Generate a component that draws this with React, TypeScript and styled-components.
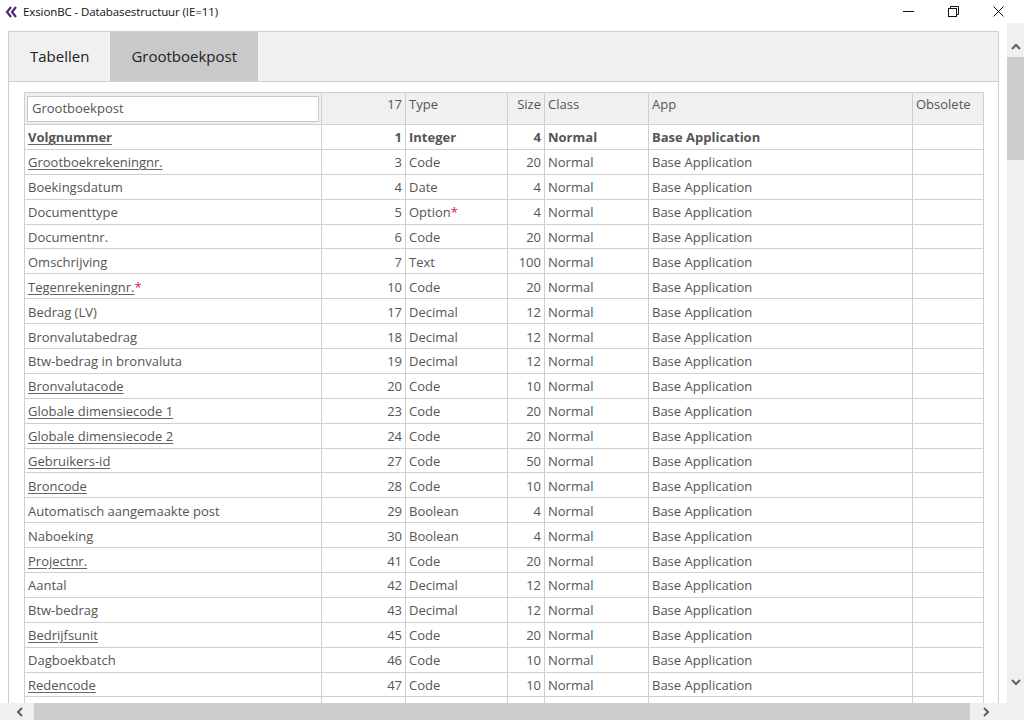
import React from "react";
import styled, { createGlobalStyle } from "styled-components";

const Global = createGlobalStyle`
  html, body { margin: 0; padding: 0; background: #fff; }
  body { width: 1024px; height: 720px; overflow: hidden; font-family: "Open Sans", "Noto Sans", sans-serif; }
  * { box-sizing: border-box; }
`;

const Window = styled.div`
  width: 1024px;
  height: 720px;
  display: flex;
  flex-direction: column;
  background: #fff;
`;

const TitleBar = styled.div`
  height: 23px;
  display: flex;
  align-items: center;
  padding-left: 5px;
  flex-shrink: 0;
`;

const TitleText = styled.span`
  font-family: "Open Sans", sans-serif;
  font-size: 11.5px;
  color: #111;
  margin-left: 5px;
  letter-spacing: -0.1px;
`;

const Controls = styled.div`
  margin-left: auto;
  margin-right: 3px;
  display: flex;
  height: 23px;
`;

const CtrlButton = styled.div`
  width: 45px;
  height: 23px;
  display: flex;
  align-items: center;
  justify-content: center;
`;

const Middle = styled.div`
  flex: 1;
  display: flex;
  min-height: 0;
`;

const Viewport = styled.div`
  flex: 1;
  overflow: hidden;
  padding: 8px 0 0 8px;
`;

const Panel = styled.div`
  width: 991px;
  border: 1px solid #cfcfcf;
  border-bottom: none;
  height: 100%;
  background: #fff;
`;

const TabBar = styled.div`
  height: 50px;
  background: #f0f0f0;
  border-bottom: 1px solid #cfcfcf;
  display: flex;
`;

const Tab = styled.div<{ $active?: boolean }>`
  padding: 0 21px 1px;
  display: flex;
  align-items: center;
  font-size: 15px;
  color: #222;
  background: ${(p) => (p.$active ? "#c9c9c9" : "transparent")};
`;

const Content = styled.div`
  padding: 10px 0 0 15px;
`;

const Table = styled.table`
  border-collapse: collapse;
  table-layout: fixed;
  width: 959px;
  font-size: 13px;
  color: #555;
`;

const HeadCell = styled.th<{ $right?: boolean }>`
  background: #f0f0f0;
  border: 1px solid #cfcfcf;
  font-weight: normal;
  text-align: ${(p) => (p.$right ? "right" : "left")};
  vertical-align: top;
  padding: 2px 3px 0 3px;
  height: 32px;
  white-space: nowrap;
`;

const SearchCell = styled.th`
  background: #f0f0f0;
  border: 1px solid #cfcfcf;
  padding: 2px;
  height: 32px;
`;

const SearchInput = styled.div`
  height: 26px;
  background: #fff;
  border: 1px solid #c8c8c8;
  display: flex;
  align-items: center;
  padding: 0 0 2px 4px;
  font-weight: normal;
  text-align: left;
  color: #555;
`;

const Cell = styled.td<{ $right?: boolean; $bold?: boolean }>`
  border: 1px solid #cfcfcf;
  padding: 1px 3px 0;
  height: 24.9px;
  white-space: nowrap;
  overflow: hidden;
  text-align: ${(p) => (p.$right ? "right" : "left")};
  font-weight: ${(p) => (p.$bold ? 700 : 400)};
`;

const Link = styled.span`
  text-decoration: underline;
  text-decoration-color: #666;
  text-underline-offset: 2px;
`;

const Star = styled.span`
  color: #e0103a;
`;

const VScroll = styled.div`
  width: 17px;
  background: #f0f0f0;
  display: flex;
  flex-direction: column;
  align-items: center;
  flex-shrink: 0;
  padding: 17px 0 13px;
`;

const ArrowBox = styled.div`
  width: 17px;
  height: 17px;
  display: flex;
  align-items: center;
  justify-content: center;
  flex-shrink: 0;
`;

const UpArrow = styled(ArrowBox)`
  align-items: flex-start;
  padding-top: 2px;
`;

const VThumb = styled.div`
  width: 17px;
  height: 103px;
  background: #cdcdcd;
`;

const VTrack = styled.div`
  flex: 1;
`;

const HScroll = styled.div`
  height: 17px;
  display: flex;
  flex-shrink: 0;
`;

const HBar = styled.div`
  width: 1007px;
  background: #f0f0f0;
  display: flex;
  align-items: center;
  padding-left: 15px;
`;

const HThumb = styled.div`
  width: 936px;
  height: 17px;
  background: #cdcdcd;
  margin-left: 9px;
`;

const RightArrow = styled(ArrowBox)`
  margin-left: 7px;
`;

const Corner = styled.div`
  flex: 1;
  background: #f0f0f0;
`;

type Row = {
  name: string;
  no: number;
  type: string;
  size: number;
  link?: boolean;
  nameStar?: boolean;
  typeStar?: boolean;
  bold?: boolean;
};

const rows: Row[] = [
  { name: "Volgnummer", no: 1, type: "Integer", size: 4, link: true, bold: true },
  { name: "Grootboekrekeningnr.", no: 3, type: "Code", size: 20, link: true },
  { name: "Boekingsdatum", no: 4, type: "Date", size: 4 },
  { name: "Documenttype", no: 5, type: "Option", size: 4, typeStar: true },
  { name: "Documentnr.", no: 6, type: "Code", size: 20 },
  { name: "Omschrijving", no: 7, type: "Text", size: 100 },
  { name: "Tegenrekeningnr.", no: 10, type: "Code", size: 20, link: true, nameStar: true },
  { name: "Bedrag (LV)", no: 17, type: "Decimal", size: 12 },
  { name: "Bronvalutabedrag", no: 18, type: "Decimal", size: 12 },
  { name: "Btw-bedrag in bronvaluta", no: 19, type: "Decimal", size: 12 },
  { name: "Bronvalutacode", no: 20, type: "Code", size: 10, link: true },
  { name: "Globale dimensiecode 1", no: 23, type: "Code", size: 20, link: true },
  { name: "Globale dimensiecode 2", no: 24, type: "Code", size: 20, link: true },
  { name: "Gebruikers-id", no: 27, type: "Code", size: 50, link: true },
  { name: "Broncode", no: 28, type: "Code", size: 10, link: true },
  { name: "Automatisch aangemaakte post", no: 29, type: "Boolean", size: 4 },
  { name: "Naboeking", no: 30, type: "Boolean", size: 4 },
  { name: "Projectnr.", no: 41, type: "Code", size: 20, link: true },
  { name: "Aantal", no: 42, type: "Decimal", size: 12 },
  { name: "Btw-bedrag", no: 43, type: "Decimal", size: 12 },
  { name: "Bedrijfsunit", no: 45, type: "Code", size: 20, link: true },
  { name: "Dagboekbatch", no: 46, type: "Code", size: 10 },
  { name: "Redencode", no: 47, type: "Code", size: 10, link: true },
];

const widths = [297, 84, 102, 37, 104, 264, 71];

const Chevron = ({ dir }: { dir: "up" | "down" | "left" | "right" }) => {
  const d = {
    up: "M2 7 L6 3 L10 7",
    down: "M2 3 L6 7 L10 3",
    left: "M7 1 L3 5 L7 9",
    right: "M3 1 L7 5 L3 9",
  }[dir];
  const vertical = dir === "up" || dir === "down";
  return (
    <svg width={vertical ? 12 : 10} height={10} viewBox={vertical ? "0 0 12 10" : "0 0 10 10"}>
      <path d={d} fill="none" stroke="#606060" strokeWidth={2} />
    </svg>
  );
};

export default function App() {
  return (
    <Window>
      <Global />
      <TitleBar>
        <svg width="13" height="12" viewBox="0 0 13 12">
          <path d="M6 1 L2 6 L6 11" fill="none" stroke="#4b2a7a" strokeWidth={2.2} />
          <path d="M11 1 L7 6 L11 11" fill="none" stroke="#4b2a7a" strokeWidth={2.2} />
        </svg>
        <TitleText>ExsionBC - Databasestructuur (IE=11)</TitleText>
        <Controls>
          <CtrlButton>
            <svg width="11" height="11" viewBox="0 0 11 11">
              <path d="M0 5.5 H11" stroke="#111" strokeWidth={1} />
            </svg>
          </CtrlButton>
          <CtrlButton>
            <svg width="11" height="11" viewBox="0 0 11 11">
              <rect x="0.5" y="2.5" width="8" height="8" fill="none" stroke="#111" />
              <path d="M2.5 2.5 V0.5 H10.5 V8.5 H8.5" fill="none" stroke="#111" />
            </svg>
          </CtrlButton>
          <CtrlButton>
            <svg width="11" height="11" viewBox="0 0 11 11">
              <path d="M0.5 0.5 L10.5 10.5 M10.5 0.5 L0.5 10.5" stroke="#111" strokeWidth={1} />
            </svg>
          </CtrlButton>
        </Controls>
      </TitleBar>
      <Middle>
        <Viewport>
          <Panel>
            <TabBar>
              <Tab>Tabellen</Tab>
              <Tab $active>Grootboekpost</Tab>
            </TabBar>
            <Content>
              <Table>
                <colgroup>
                  {widths.map((w, i) => (
                    <col key={i} style={{ width: w }} />
                  ))}
                </colgroup>
                <thead>
                  <tr>
                    <SearchCell>
                      <SearchInput>Grootboekpost</SearchInput>
                    </SearchCell>
                    <HeadCell $right>17</HeadCell>
                    <HeadCell>Type</HeadCell>
                    <HeadCell $right>Size</HeadCell>
                    <HeadCell>Class</HeadCell>
                    <HeadCell>App</HeadCell>
                    <HeadCell>Obsolete</HeadCell>
                  </tr>
                </thead>
                <tbody>
                  {rows.map((r) => (
                    <tr key={r.no}>
                      <Cell $bold={r.bold}>
                        {r.link ? <Link>{r.name}</Link> : r.name}
                        {r.nameStar && <Star>*</Star>}
                      </Cell>
                      <Cell $right $bold={r.bold}>{r.no}</Cell>
                      <Cell $bold={r.bold}>
                        {r.type}
                        {r.typeStar && <Star>*</Star>}
                      </Cell>
                      <Cell $right $bold={r.bold}>{r.size}</Cell>
                      <Cell $bold={r.bold}>Normal</Cell>
                      <Cell $bold={r.bold}>Base Application</Cell>
                      <Cell />
                    </tr>
                  ))}
                  <tr>
                    {widths.map((_, i) => (
                      <Cell key={i} />
                    ))}
                  </tr>
                </tbody>
              </Table>
            </Content>
          </Panel>
        </Viewport>
        <VScroll>
          <UpArrow>
            <Chevron dir="up" />
          </UpArrow>
          <VThumb />
          <VTrack />
          <ArrowBox>
            <Chevron dir="down" />
          </ArrowBox>
        </VScroll>
      </Middle>
      <HScroll>
        <HBar>
          <Chevron dir="left" />
          <HThumb />
          <RightArrow>
            <Chevron dir="right" />
          </RightArrow>
        </HBar>
        <Corner />
      </HScroll>
    </Window>
  );
}
